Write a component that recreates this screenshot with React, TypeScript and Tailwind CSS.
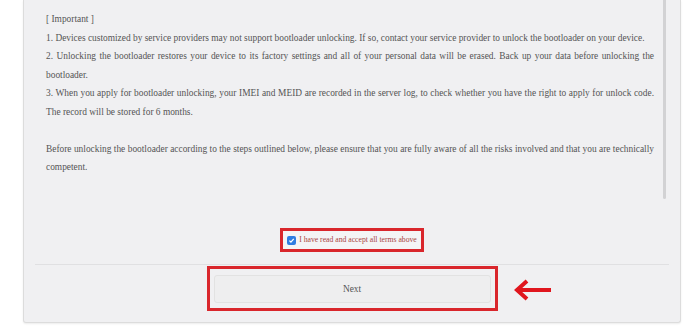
import React from "react";

const App = () => {
  return (
    <div className="w-[700px] h-[334px] bg-white overflow-hidden font-['Liberation_Serif',serif]">
      {/* Panel */}
      <div className="ml-[23px] w-[658px] h-[323px] bg-[#f0f0f2] border border-t-0 border-[#dcdcdc] rounded-b-[3px] shadow-[0_1px_2px_rgba(0,0,0,0.08)] flex flex-col">
        {/* Terms text + scrollbar */}
        <div className="flex h-[200px]">
          <div className="ml-[22px] w-[608px] pt-[10px] text-[9.4px] leading-[18.5px] text-[#555] text-justify">
            <p>[ Important ]</p>
            <p>
              1. Devices customized by service providers may not support bootloader unlocking. If so, contact your
              service provider to unlock the bootloader on your device.
            </p>
            <p>
              2. Unlocking the bootloader restores your device to its factory settings and all of your personal data
              will be erased. Back up your data before unlocking the bootloader.
            </p>
            <p>
              3. When you apply for bootloader unlocking, your IMEI and MEID are recorded in the server log, to check
              whether you have the right to apply for unlock code. The record will be stored for 6 months.
            </p>
            <p className="mt-[18.5px]">
              Before unlocking the bootloader according to the steps outlined below, please ensure that you are fully
              aware of all the risks involved and that you are technically competent.
            </p>
          </div>
          <div className="ml-[9px] w-[3px] h-[199px] bg-[#d2d2d4] rounded-b-full" />
        </div>

        {/* Accept checkbox */}
        <div className="mt-[28px] flex justify-center">
          <div className="h-[24px] px-[4px] border-[3px] border-[#d9262c] bg-[#f4f4f5] flex items-center gap-[3px]">
            <span className="w-[9px] h-[9px] rounded-[2px] bg-[#2f7de1] flex items-center justify-center">
              <svg width="7" height="7" viewBox="0 0 10 10">
                <path d="M2 5.2 L4.2 7.4 L8.2 2.8" fill="none" stroke="white" strokeWidth="1.8" />
              </svg>
            </span>
            <span className="text-[7.7px] text-[#a94442]">I have read and accept all terms above</span>
          </div>
        </div>

        {/* Divider */}
        <div className="mt-[12px] mx-[11px] h-px bg-[#e0e0e2]" />

        {/* Next button */}
        <div className="relative mt-[1px] flex justify-center">
          <div className="w-[291px] h-[45px] border-[3px] border-[#d9262c] pt-[6px] px-[4px]">
            <div className="h-[28px] rounded-[3px] border border-[#e2e2e2] bg-[#eeeeef] flex items-center justify-center text-[9.4px] text-[#555]">
              Next
            </div>
          </div>
          {/* Annotation arrow */}
          <svg className="absolute left-[489px] top-[12px]" width="40" height="24" viewBox="0 0 40 24">
            <path
              d="M38 12 H5 M14 3 L4 12 L14 21"
              fill="none"
              stroke="#e0161e"
              strokeWidth="4"
              strokeLinejoin="miter"
            />
          </svg>
        </div>
      </div>
    </div>
  );
};

export default App;
